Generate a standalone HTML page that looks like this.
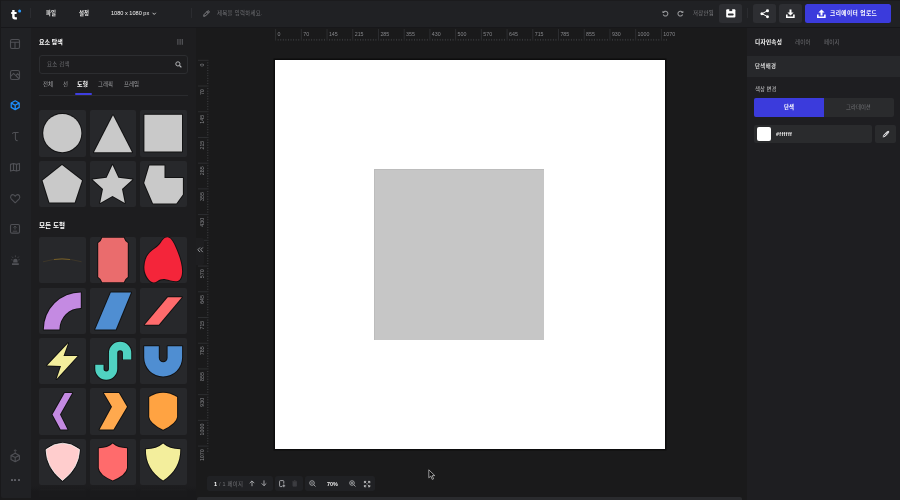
<!DOCTYPE html>
<html lang="ko">
<head>
<meta charset="utf-8">
<title>디자인 에디터</title>
<style>
*{box-sizing:border-box;margin:0;padding:0}
html,body{width:900px;height:500px;overflow:hidden;background:#1a1a1b}
body{font-family:"Liberation Sans","Noto Sans CJK KR",sans-serif;color:#d8d8d8;font-size:5.4px;position:relative}
.a{position:absolute}
.t{position:absolute;will-change:transform;white-space:nowrap;line-height:8px;height:8px;font-size:5.4px}
.b{font-weight:700;color:#fff}
.g{color:#707175}
.tile{position:absolute;width:46.8px;height:46.4px;background:#27282b;border-radius:2px;overflow:hidden}
.tile svg{position:absolute;left:0;top:0;width:46.8px;height:46.4px;overflow:visible}
.btn{position:absolute;background:#2d2e32;border-radius:2.5px}
.ic{position:absolute;overflow:visible}
.rl{position:absolute;will-change:transform;font-size:5.1px;line-height:6px;height:6px;color:#85868a;white-space:nowrap}
.mt{position:absolute;background:#313235}
</style>
</head>
<body>
<div class="a" style="left:0;top:0;width:900px;height:26.7px;background:#202124"></div>
<div class="a" style="left:0;top:0;width:900px;height:1px;background:#1b1b1d"></div>
<div class="a" style="left:1px;top:26.7px;width:30px;height:471px;background:#202124;border-radius:0 0 0 2px"></div>
<div class="a" style="left:31px;top:26.7px;width:165.3px;height:470px;background:#1d1d1f"></div>
<div class="a" style="left:747.2px;top:26.7px;width:152.8px;height:473.3px;background:#1e1e21"></div>
<div class="a" style="left:747.2px;top:55.6px;width:152.8px;height:21.4px;background:#27282b"></div>
<div class="a" style="left:0;top:26.6px;width:900px;height:1px;background:#17171a"></div>
<div class="a" style="left:0;top:0;width:1px;height:500px;background:#19191b"></div>
<div class="a" style="left:197px;top:496.6px;width:545px;height:4px;background:#2a2b2e;border-radius:2px 2px 0 0"></div>
<div class="a" style="left:275px;top:60px;width:389.6px;height:389.2px;background:#fff;box-shadow:0 0 0 1.5px #0c0c0d"></div>
<div class="a" style="left:373.7px;top:169.4px;width:170.2px;height:170.3px;background:#c6c6c6;box-shadow:inset 1px 1px 0 #bcbcbc"></div>
<svg class="ic" style="left:10.1px;top:8.8px" width="12" height="11" viewBox="0 0 12 11"><path d="M1.2 2.9 H2.2 V0.9 H4.6 V2.9 H6.6 V4.9 H4.6 V7.3 Q4.6 8.3 5.6 8.3 H6.9 V10.4 H4.9 Q2.2 10.4 2.2 7.7 V4.9 H1.2 Z" fill="#fff"/><circle cx="9.6" cy="2.05" r="1.5" fill="#2a9bff"/></svg>
<div class="a" style="left:30.3px;top:8.3px;width:0.8px;height:10px;background:#2b2c30"></div>
<div class="t" style="left:46.3px;top:9.3px;color:#e8e8e8;font-weight:700">파일</div>
<div class="t" style="left:79px;top:9.3px;color:#e8e8e8;font-weight:700">설정</div>
<div class="t" style="left:111.2px;top:9.3px;color:#f2f2f2;font-weight:500;font-size:5.6px">1080 x 1080 px</div>
<svg class="ic" style="left:151.8px;top:11.8px" width="4.4" height="3.4" viewBox="0 0 4.4 3.4"><path d="M0.6 0.8 L2.2 2.5 L3.8 0.8" fill="none" stroke="#d0d0d0" stroke-width="0.9"/></svg>
<div class="a" style="left:191px;top:8.3px;width:0.8px;height:10px;background:#2b2c30"></div>
<svg class="ic" style="left:202.6px;top:10.2px" width="7" height="7" viewBox="0 0 7 7"><path d="M0.7 6.3 L1.1 4.5 L4.6 1 Q5.2 0.4 5.9 1.1 Q6.6 1.8 6 2.4 L2.5 5.9 Z M4 1.7 L5.3 3" fill="none" stroke="#9a9b9e" stroke-width="0.8" stroke-linejoin="round"/></svg>
<div class="t g" style="letter-spacing:0.32px;left:216.8px;top:9.3px">제목을 입력하세요.</div>
<svg class="ic" style="left:661.5px;top:9.6px" width="6.8" height="6.8" viewBox="0 0 7 7"><path d="M1.3 2.6 A2.5 2.5 0 1 1 1.2 4.6" fill="none" stroke="#9a9b9e" stroke-width="1.05"/><path d="M0.5 0.7 V3.2 H3 Z" fill="#9a9b9e"/></svg>
<svg class="ic" style="left:676.7px;top:9.6px" width="6.8" height="6.8" viewBox="0 0 7 7"><path d="M5.7 2.6 A2.5 2.5 0 1 0 5.8 4.6" fill="none" stroke="#9a9b9e" stroke-width="1.05"/><path d="M6.5 0.7 V3.2 H4 Z" fill="#9a9b9e"/></svg>
<div class="t" style="color:#7c7d81;letter-spacing:0.3px;left:693.3px;top:9.3px">저장안됨</div>
<div class="btn" style="left:719.2px;top:4.4px;width:22.8px;height:18.3px"></div>
<svg class="ic" style="left:725.7px;top:9.1px" width="9.6" height="8.8" viewBox="0 0 9.6 8.8"><path d="M1.2 0.2 H8.4 Q9.4 0.2 9.4 1.2 V7.6 Q9.4 8.6 8.4 8.6 H1.2 Q0.2 8.6 0.2 7.6 V1.2 Q0.2 0.2 1.2 0.2 Z" fill="#fff"/><rect x="3.3" y="0" width="2.9" height="2.1" fill="#2d2e32"/><rect x="1.9" y="4.4" width="5.8" height="2.1" rx="0.9" fill="#2d2e32"/></svg>
<div class="a" style="left:746.8px;top:8px;width:0.8px;height:10.4px;background:#2b2c30"></div>
<div class="btn" style="left:752.8px;top:4.4px;width:22.8px;height:18.3px"></div>
<svg class="ic" style="left:760px;top:8.7px" width="9.4" height="9.4" viewBox="0 0 9.4 9.4"><path d="M7.4 1.8 L2 4.7 L7.4 7.6" fill="none" stroke="#fff" stroke-width="1"/><circle cx="7.5" cy="1.7" r="1.5" fill="#fff"/><circle cx="1.9" cy="4.7" r="1.5" fill="#fff"/><circle cx="7.5" cy="7.7" r="1.5" fill="#fff"/></svg>
<div class="btn" style="left:779px;top:4.4px;width:22.6px;height:18.3px"></div>
<svg class="ic" style="left:785.8px;top:8.8px" width="9" height="9.4" viewBox="0 0 9 9.4"><path d="M3.5 0.4 H5.5 V3.4 H7.6 L4.5 6.6 L1.4 3.4 H3.5 Z" fill="#fff"/><path d="M0.8 5.6 V8.3 H7.9 V5.6" fill="none" stroke="#fff" stroke-width="1.6"/></svg>
<div class="btn" style="left:805px;top:4.4px;width:86.4px;height:18.3px;background:#3b3bdc"></div>
<svg class="ic" style="left:817.2px;top:8.8px" width="9" height="9.4" viewBox="0 0 9 9.4"><path d="M3.5 6.6 H5.5 V3.6 H7.6 L4.5 0.4 L1.4 3.6 H3.5 Z" fill="#fff"/><path d="M0.8 5.6 V8.3 H7.9 V5.6" fill="none" stroke="#fff" stroke-width="1.6"/></svg>
<div class="t b" style="letter-spacing:0.42px;left:829.6px;top:9.3px;font-size:5.7px">크리에이터 업로드</div>
<svg class="ic" style="left:10.2px;top:39px" width="10" height="10" viewBox="0 0 10 10"><rect x="0.5" y="0.5" width="9" height="9" rx="1.4" fill="none" stroke="#4f5055" stroke-width="1.1"/><path d="M0.5 3.2 H9.5 M5 3.2 V9.5" stroke="#4f5055" stroke-width="1.1" fill="none"/></svg>
<svg class="ic" style="left:10.2px;top:69.8px" width="10" height="10" viewBox="0 0 10 10"><rect x="0.5" y="0.5" width="9" height="9" rx="1.8" fill="none" stroke="#4f5055" stroke-width="1.1"/><path d="M0.6 6.4 L3.6 3.4 L9.3 9 M6.2 5.2 L7.6 3.8 L9.4 5.6" stroke="#4f5055" stroke-width="1.1" fill="none"/></svg>
<svg class="ic" style="left:10.2px;top:100.2px" width="10.4" height="10.4" viewBox="0 0 10.4 10.4"><path d="M5.2 0.8 L9.2 3 V7.4 L5.2 9.6 L1.2 7.4 V3 Z M1.4 3.1 L5.2 5.3 L9 3.1 M5.2 5.3 V9.4" fill="none" stroke="#1e90ff" stroke-width="1.25" stroke-linejoin="round"/></svg>
<svg class="ic" style="left:11.8px;top:131.8px" width="7" height="9.4" viewBox="0 0 7 9.4"><path d="M0.4 1.9 Q0.8 0.6 2 0.6 H6.6 M3.4 0.6 V6.6 Q3.4 8.8 5.6 8.6" fill="none" stroke="#4f5055" stroke-width="1.05"/></svg>
<svg class="ic" style="left:10.4px;top:163px" width="10" height="8.6" viewBox="0 0 10 8.6"><path d="M0.5 1.4 L3.5 0.5 L6.5 1.4 L9.5 0.5 V7.2 L6.5 8.1 L3.5 7.2 L0.5 8.1 Z M3.5 0.5 V7.2 M6.5 1.4 V8.1" fill="none" stroke="#4f5055" stroke-width="1.1" stroke-linejoin="round"/></svg>
<svg class="ic" style="left:10.2px;top:193.6px" width="10.4" height="9.4" viewBox="0 0 10.4 9.4"><path d="M5.2 8.8 L1.2 4.8 Q0 3.2 1 1.7 Q2.2 0.2 3.9 0.9 Q4.8 1.3 5.2 2.2 Q5.6 1.3 6.5 0.9 Q8.2 0.2 9.4 1.7 Q10.4 3.2 9.2 4.8 Z" fill="none" stroke="#4f5055" stroke-width="1.1" stroke-linejoin="round"/></svg>
<svg class="ic" style="left:10.2px;top:223.8px" width="10" height="9.6" viewBox="0 0 10 9.6"><rect x="0.5" y="0.5" width="9" height="8.6" rx="1.4" fill="none" stroke="#4f5055" stroke-width="1.1"/><path d="M5 5.6 V2.2 M3.5 3.6 L5 2.1 L6.5 3.6 M2.8 7.2 H7.2" fill="none" stroke="#4f5055" stroke-width="0.9"/></svg>
<svg class="ic" style="left:11.2px;top:254.8px" width="8.8" height="10.4" viewBox="0 0 8.8 10.4"><path d="M2.2 7.6 V6 Q2.2 3.8 4.4 3.8 Q6.6 3.8 6.6 6 V7.6 Z M1 8.2 H7.8 V9.9 H1 Z" fill="#4f5055"/><path d="M4.4 0.4 V2.2 M1 1.6 L2.1 2.9 M7.8 1.6 L6.7 2.9 M0.2 4.6 L1.5 5 M8.6 4.6 L7.3 5" stroke="#4f5055" stroke-width="0.7" fill="none"/></svg>
<svg class="ic" style="left:10.2px;top:449px" width="10.4" height="13.4" viewBox="0 0 10.4 13.4"><path d="M5.2 4.2 L9.4 6.4 V10.6 L5.2 12.8 L1 10.6 V6.4 Z M1.2 6.5 L5.2 8.6 L9.2 6.5 M5.2 8.6 V12.6" fill="none" stroke="#4f5055" stroke-width="1.1" stroke-linejoin="round"/><path d="M5.2 4 V0.8 M3.9 2 L5.2 0.7 L6.5 2" fill="none" stroke="#4f5055" stroke-width="0.9"/></svg>
<div class="a" style="left:10.8px;top:478.7px;width:2.1px;height:2.1px;background:#63646a;border-radius:0.4px"></div>
<div class="a" style="left:14.4px;top:478.7px;width:2.1px;height:2.1px;background:#63646a;border-radius:0.4px"></div>
<div class="a" style="left:18.0px;top:478.7px;width:2.1px;height:2.1px;background:#63646a;border-radius:0.4px"></div>
<div class="t b" style="left:39px;top:37.6px;font-size:6px">요소 탐색</div>
<svg class="ic" style="left:177.2px;top:39.3px" width="6.2" height="5.8" viewBox="0 0 6.2 5.8"><path d="M0.9 0 V5.8 M3.1 0 V5.8 M5.3 0 V5.8" stroke="#707175" stroke-width="0.8"/></svg>
<div class="a" style="left:39.1px;top:55px;width:148.6px;height:18.7px;border:0.8px solid #2c2d30;border-radius:3px;background:#1d1d1f"></div>
<div class="t g" style="letter-spacing:0.25px;left:47.2px;top:60.2px">요소 검색</div>
<svg class="ic" style="left:175.4px;top:60.8px" width="7" height="7" viewBox="0 0 7 7"><circle cx="2.9" cy="2.9" r="2.1" fill="none" stroke="#b4b5b8" stroke-width="1"/><path d="M4.5 4.5 L6.4 6.4" stroke="#b4b5b8" stroke-width="1.2"/></svg>
<div class="t" style="left:43px;top:80px;color:#a4a5a8">전체</div>
<div class="t" style="left:62.7px;top:80px;color:#a4a5a8">선</div>
<div class="t b" style="left:77.4px;top:80px;font-size:6px">도형</div>
<div class="t" style="left:98.2px;top:80px;color:#a4a5a8">그래픽</div>
<div class="t" style="left:124.1px;top:80px;color:#a4a5a8">프레임</div>
<div class="a" style="left:39.1px;top:95px;width:148.6px;height:0.7px;background:#2a2b2e"></div>
<div class="a" style="left:74.8px;top:93.2px;width:17.5px;height:2px;background:#3e3ee0;border-radius:1px"></div>
<div class="t b" style="left:39px;top:222.2px;font-size:6.6px">모든 도형</div>
<div class="tile" style="left:39.1px;top:110.3px"><svg viewBox="0 0 46.8 46.4"><circle cx="23.3" cy="23.1" r="19.1" fill="#c9c9c9" stroke="#121213" stroke-width="2" stroke-linejoin="round" paint-order="stroke"/></svg></div>
<div class="tile" style="left:89.6px;top:110.3px"><svg viewBox="0 0 46.8 46.4"><path d="M23 5.3 L42 42.2 H4 Z" fill="#c9c9c9" stroke="#121213" stroke-width="2" stroke-linejoin="round" paint-order="stroke"/></svg></div>
<div class="tile" style="left:139.9px;top:110.3px"><svg viewBox="0 0 46.8 46.4"><rect x="4.4" y="4.8" width="37.6" height="36.7" fill="#c9c9c9" stroke="#121213" stroke-width="2" stroke-linejoin="round" paint-order="stroke"/></svg></div>
<div class="tile" style="left:39.1px;top:160.9px"><svg viewBox="0 0 46.8 46.4"><path d="M23 4.1 L43 19.6 L35.7 41.4 H10.4 L3.5 19.6 Z" fill="#c9c9c9" stroke="#121213" stroke-width="2" stroke-linejoin="round" paint-order="stroke"/></svg></div>
<div class="tile" style="left:89.6px;top:160.9px"><svg viewBox="0 0 46.8 46.4"><polygon points="22.5,3.9 28.4,16.8 42.5,18.4 32.0,28.0 34.8,41.9 22.5,34.9 10.2,41.9 13.0,28.0 2.5,18.4 16.6,16.8" fill="#c9c9c9" stroke="#121213" stroke-width="2" stroke-linejoin="round" paint-order="stroke"/></svg></div>
<div class="tile" style="left:139.9px;top:160.9px"><svg viewBox="0 0 46.8 46.4"><path d="M9.4 4.4 H24.5 V16.9 H42.9 V33.5 L36.4 42.4 H13 L4.2 22.1 Z" fill="#c9c9c9" stroke="#121213" stroke-width="2" stroke-linejoin="round" paint-order="stroke"/></svg></div>
<div class="tile" style="left:39.1px;top:237.1px"><svg viewBox="0 0 46.8 46.4"><path d="M4 24.8 Q23 19.2 42.6 24.8" fill="none" stroke="#5a4a24" stroke-width="0.55" opacity="0.75"/><path d="M15 22.5 Q23 21.3 31 22.5" fill="none" stroke="#a07a26" stroke-width="0.6"/></svg></div>
<div class="tile" style="left:89.6px;top:237.1px"><svg viewBox="0 0 46.8 46.4"><path d="M12.2 0.7 H33.8 Q34.8 4.4 37.8 6.1 V39.9 Q34.8 41.6 33.8 45.3 H12.2 Q11.2 41.6 8.2 39.9 V6.1 Q11.2 4.4 12.2 0.7 Z" fill="#ea6c6d" stroke="#121213" stroke-width="2" stroke-linejoin="round" paint-order="stroke"/></svg></div>
<div class="tile" style="left:139.9px;top:237.1px"><svg viewBox="0 0 46.8 46.4"><path d="M27.6 0.3 C31.6 0.6 34.6 7.5 37 13.5 C39.8 20.5 42.4 28.5 42.1 35 C41.8 40.6 40 44 36.4 44.2 C32.4 44.4 29 42.6 25.6 42.2 C21.6 41.8 19.6 42.6 17.2 44.2 C14.6 45.9 12.2 45.8 10.2 44 C6.6 40.8 4 35 4.4 29.4 C4.8 23.4 6.4 19 9.8 15.6 C13.6 11.8 17.6 10.4 20.6 6 C22.6 3 24.4 0.1 27.6 0.3 Z" fill="#f4253a" stroke="#121213" stroke-width="2" stroke-linejoin="round" paint-order="stroke"/></svg></div>
<div class="tile" style="left:39.1px;top:287.6px"><svg viewBox="0 0 46.8 46.4"><path d="M4.8 41.4 A37 37 0 0 1 41.8 4.4 V20 A21.4 21.4 0 0 0 20.4 41.4 Z" fill="#c48ae2" stroke="#121213" stroke-width="2" stroke-linejoin="round" paint-order="stroke"/></svg></div>
<div class="tile" style="left:89.6px;top:287.6px"><svg viewBox="0 0 46.8 46.4"><path d="M20.8 4.6 H41 L25.8 41.6 H5.2 Z" fill="#4f8ed2" stroke="#121213" stroke-width="2" stroke-linejoin="round" paint-order="stroke"/></svg></div>
<div class="tile" style="left:139.9px;top:287.6px"><svg viewBox="0 0 46.8 46.4"><path d="M27.8 9.2 H41.9 L18.8 36.8 H4.7 Z" fill="#ff6b6c" stroke="#121213" stroke-width="2" stroke-linejoin="round" paint-order="stroke"/></svg></div>
<div class="tile" style="left:39.1px;top:338px"><svg viewBox="0 0 46.8 46.4"><path d="M29.1 5.2 L24.5 17.9 H38.6 L17.6 41 L22 28.1 L8.1 27.4 Z" fill="#f3ee9c" stroke="#121213" stroke-width="2" stroke-linejoin="round" paint-order="stroke"/></svg></div>
<div class="tile" style="left:89.6px;top:338px"><svg viewBox="0 0 46.8 46.4"><path d="M9.4 26.2 V30.8 A6.85 6.85 0 0 0 23.1 30.8 V15 A7 7 0 0 1 37.1 15 V22" fill="none" stroke="#141415" stroke-width="10.4"/><path d="M9.4 26.7 V30.8 A6.85 6.85 0 0 0 23.1 30.8 V15 A7 7 0 0 1 37.1 15 V21.5" fill="none" stroke="#50d2c2" stroke-width="8.3"/></svg></div>
<div class="tile" style="left:139.9px;top:338px"><svg viewBox="0 0 46.8 46.4"><path d="M4.2 8.2 H18.8 V19.8 A4.4 4.4 0 0 0 27.6 19.8 V8.2 H42.1 V19.5 A18.95 18.95 0 0 1 4.2 19.5 Z" fill="#4f8ed2" stroke="#121213" stroke-width="2" stroke-linejoin="round" paint-order="stroke"/></svg></div>
<div class="tile" style="left:39.1px;top:388.4px"><svg viewBox="0 0 46.8 46.4"><path d="M25.7 4.9 H33.2 L21 26.6 L28.5 41.6 H21.6 L13.5 26.6 Z" fill="#c48ae2" stroke="#121213" stroke-width="2" stroke-linejoin="round" paint-order="stroke"/></svg></div>
<div class="tile" style="left:89.6px;top:388.4px"><svg viewBox="0 0 46.8 46.4"><path d="M13.9 4.9 H28.9 L37 18.7 L23.5 41.6 H9.6 L22 18.7 Z" fill="#ffa94e" stroke="#121213" stroke-width="2" stroke-linejoin="round" paint-order="stroke"/></svg></div>
<div class="tile" style="left:139.9px;top:388.4px"><svg viewBox="0 0 46.8 46.4"><path d="M9.2 9 Q23.1 0.4 37.1 9 V29 Q36.4 35.4 23.1 41.8 Q9.9 35.4 9.2 29 Z" fill="#ffa342" stroke="#121213" stroke-width="2" stroke-linejoin="round" paint-order="stroke"/></svg></div>
<div class="tile" style="left:39.1px;top:438.9px"><svg viewBox="0 0 46.8 46.4"><path d="M7 10.6 Q23.5 -2.2 40.6 10.6 Q40 29 23.5 41.5 Q7.5 29 7 10.6 Z" fill="none" stroke="#141415" stroke-width="2.4"/><path d="M7 10.6 Q23.5 -2.2 40.6 10.6 Q40 29 23.5 41.5 Q7.5 29 7 10.6 Z" fill="#ffcdcd" stroke="#fff" stroke-width="0.7"/></svg></div>
<div class="tile" style="left:89.6px;top:438.9px"><svg viewBox="0 0 46.8 46.4"><path d="M8.8 9.2 Q18 9 22.7 4.5 Q27.5 9 37 9.2 V29 Q36 36 22.7 41.4 Q9.5 36 8.8 29 Z" fill="#ff6b6c" stroke="#121213" stroke-width="2" stroke-linejoin="round" paint-order="stroke"/></svg></div>
<div class="tile" style="left:139.9px;top:438.9px"><svg viewBox="0 0 46.8 46.4"><path d="M5.9 10.2 Q17 10 23.1 4.5 Q29 10 40.3 10.2 Q40.5 30 23.1 41.5 Q5.5 30 5.9 10.2 Z" fill="#f3ee9c" stroke="#121213" stroke-width="2" stroke-linejoin="round" paint-order="stroke"/></svg></div>
<div class="a" style="left:39.1px;top:489.3px;width:46.8px;height:7.3px;background:#232426;border-radius:2px 2px 0 0"></div>
<div class="a" style="left:89.6px;top:489.3px;width:46.8px;height:7.3px;background:#232426;border-radius:2px 2px 0 0"></div>
<div class="a" style="left:139.9px;top:489.3px;width:46.8px;height:7.3px;background:#232426;border-radius:2px 2px 0 0"></div>
<div class="a" style="left:31px;top:485.5px;width:165.3px;height:5.5px;background:linear-gradient(rgba(25,25,27,0),rgba(25,25,27,0.88))"></div>
<div class="a" style="left:31px;top:491px;width:165.3px;height:9px;background:rgba(25,25,27,0.88)"></div>
<div class="a" style="left:31px;top:496.7px;width:165.6px;height:3.3px;background:#19191b"></div>
<svg class="ic" style="left:0;top:0" width="900" height="500" viewBox="0 0 900 500" font-family='"Liberation Sans",sans-serif' font-size="5.3" fill="#85868a"><path d="M278.17 38.9V40.7M280.74 38.9V40.7M283.32 38.9V40.7M285.89 38.9V40.7M288.46 38.9V40.7M291.03 38.9V40.7M293.60 38.9V40.7M296.18 38.9V40.7M298.75 38.9V40.7M303.89 38.9V40.7M306.46 38.9V40.7M309.04 38.9V40.7M311.61 38.9V40.7M314.18 38.9V40.7M316.75 38.9V40.7M319.32 38.9V40.7M321.90 38.9V40.7M324.47 38.9V40.7M329.61 38.9V40.7M332.18 38.9V40.7M334.76 38.9V40.7M337.33 38.9V40.7M339.90 38.9V40.7M342.47 38.9V40.7M345.04 38.9V40.7M347.62 38.9V40.7M350.19 38.9V40.7M355.33 38.9V40.7M357.90 38.9V40.7M360.48 38.9V40.7M363.05 38.9V40.7M365.62 38.9V40.7M368.19 38.9V40.7M370.76 38.9V40.7M373.34 38.9V40.7M375.91 38.9V40.7M381.05 38.9V40.7M383.62 38.9V40.7M386.20 38.9V40.7M388.77 38.9V40.7M391.34 38.9V40.7M393.91 38.9V40.7M396.48 38.9V40.7M399.06 38.9V40.7M401.63 38.9V40.7M406.77 38.9V40.7M409.34 38.9V40.7M411.92 38.9V40.7M414.49 38.9V40.7M417.06 38.9V40.7M419.63 38.9V40.7M422.20 38.9V40.7M424.78 38.9V40.7M427.35 38.9V40.7M432.49 38.9V40.7M435.06 38.9V40.7M437.64 38.9V40.7M440.21 38.9V40.7M442.78 38.9V40.7M445.35 38.9V40.7M447.92 38.9V40.7M450.50 38.9V40.7M453.07 38.9V40.7M458.21 38.9V40.7M460.78 38.9V40.7M463.36 38.9V40.7M465.93 38.9V40.7M468.50 38.9V40.7M471.07 38.9V40.7M473.64 38.9V40.7M476.22 38.9V40.7M478.79 38.9V40.7M483.93 38.9V40.7M486.50 38.9V40.7M489.08 38.9V40.7M491.65 38.9V40.7M494.22 38.9V40.7M496.79 38.9V40.7M499.36 38.9V40.7M501.94 38.9V40.7M504.51 38.9V40.7M509.65 38.9V40.7M512.22 38.9V40.7M514.80 38.9V40.7M517.37 38.9V40.7M519.94 38.9V40.7M522.51 38.9V40.7M525.08 38.9V40.7M527.66 38.9V40.7M530.23 38.9V40.7M535.37 38.9V40.7M537.94 38.9V40.7M540.52 38.9V40.7M543.09 38.9V40.7M545.66 38.9V40.7M548.23 38.9V40.7M550.80 38.9V40.7M553.38 38.9V40.7M555.95 38.9V40.7M561.09 38.9V40.7M563.66 38.9V40.7M566.24 38.9V40.7M568.81 38.9V40.7M571.38 38.9V40.7M573.95 38.9V40.7M576.52 38.9V40.7M579.10 38.9V40.7M581.67 38.9V40.7M586.81 38.9V40.7M589.38 38.9V40.7M591.96 38.9V40.7M594.53 38.9V40.7M597.10 38.9V40.7M599.67 38.9V40.7M602.24 38.9V40.7M604.82 38.9V40.7M607.39 38.9V40.7M612.53 38.9V40.7M615.10 38.9V40.7M617.68 38.9V40.7M620.25 38.9V40.7M622.82 38.9V40.7M625.39 38.9V40.7M627.96 38.9V40.7M630.54 38.9V40.7M633.11 38.9V40.7M638.25 38.9V40.7M640.82 38.9V40.7M643.40 38.9V40.7M645.97 38.9V40.7M648.54 38.9V40.7M651.11 38.9V40.7M653.68 38.9V40.7M656.26 38.9V40.7M658.83 38.9V40.7M663.97 38.9V40.7M666.54 38.9V40.7M207 62.87H208.4M207 65.44H208.4M207 68.02H208.4M207 70.59H208.4M207 73.16H208.4M207 75.73H208.4M207 78.30H208.4M207 80.88H208.4M207 83.45H208.4M207 88.59H208.4M207 91.16H208.4M207 93.74H208.4M207 96.31H208.4M207 98.88H208.4M207 101.45H208.4M207 104.02H208.4M207 106.60H208.4M207 109.17H208.4M207 114.31H208.4M207 116.88H208.4M207 119.46H208.4M207 122.03H208.4M207 124.60H208.4M207 127.17H208.4M207 129.74H208.4M207 132.32H208.4M207 134.89H208.4M207 140.03H208.4M207 142.60H208.4M207 145.18H208.4M207 147.75H208.4M207 150.32H208.4M207 152.89H208.4M207 155.46H208.4M207 158.04H208.4M207 160.61H208.4M207 165.75H208.4M207 168.32H208.4M207 170.90H208.4M207 173.47H208.4M207 176.04H208.4M207 178.61H208.4M207 181.18H208.4M207 183.76H208.4M207 186.33H208.4M207 191.47H208.4M207 194.04H208.4M207 196.62H208.4M207 199.19H208.4M207 201.76H208.4M207 204.33H208.4M207 206.90H208.4M207 209.48H208.4M207 212.05H208.4M207 217.19H208.4M207 219.76H208.4M207 222.34H208.4M207 224.91H208.4M207 227.48H208.4M207 230.05H208.4M207 232.62H208.4M207 235.20H208.4M207 237.77H208.4M207 242.91H208.4M207 245.48H208.4M207 248.06H208.4M207 250.63H208.4M207 253.20H208.4M207 255.77H208.4M207 258.34H208.4M207 260.92H208.4M207 263.49H208.4M207 268.63H208.4M207 271.20H208.4M207 273.78H208.4M207 276.35H208.4M207 278.92H208.4M207 281.49H208.4M207 284.06H208.4M207 286.64H208.4M207 289.21H208.4M207 294.35H208.4M207 296.92H208.4M207 299.50H208.4M207 302.07H208.4M207 304.64H208.4M207 307.21H208.4M207 309.78H208.4M207 312.36H208.4M207 314.93H208.4M207 320.07H208.4M207 322.64H208.4M207 325.22H208.4M207 327.79H208.4M207 330.36H208.4M207 332.93H208.4M207 335.50H208.4M207 338.08H208.4M207 340.65H208.4M207 345.79H208.4M207 348.36H208.4M207 350.94H208.4M207 353.51H208.4M207 356.08H208.4M207 358.65H208.4M207 361.22H208.4M207 363.80H208.4M207 366.37H208.4M207 371.51H208.4M207 374.08H208.4M207 376.66H208.4M207 379.23H208.4M207 381.80H208.4M207 384.37H208.4M207 386.94H208.4M207 389.52H208.4M207 392.09H208.4M207 397.23H208.4M207 399.80H208.4M207 402.38H208.4M207 404.95H208.4M207 407.52H208.4M207 410.09H208.4M207 412.66H208.4M207 415.24H208.4M207 417.81H208.4M207 422.95H208.4M207 425.52H208.4M207 428.10H208.4M207 430.67H208.4M207 433.24H208.4M207 435.81H208.4M207 438.38H208.4M207 440.96H208.4M207 443.53H208.4M207 448.67H208.4M207 451.24H208.4" stroke="#4c4d50" stroke-width="0.6" fill="none"/><path d="M275.60 29.1V40.7M198 60.30H208.6M301.32 29.1V40.7M198 86.02H208.6M327.04 29.1V40.7M198 111.74H208.6M352.76 29.1V40.7M198 137.46H208.6M378.48 29.1V40.7M198 163.18H208.6M404.20 29.1V40.7M198 188.90H208.6M429.92 29.1V40.7M198 214.62H208.6M455.64 29.1V40.7M198 240.34H208.6M481.36 29.1V40.7M198 266.06H208.6M507.08 29.1V40.7M198 291.78H208.6M532.80 29.1V40.7M198 317.50H208.6M558.52 29.1V40.7M198 343.22H208.6M584.24 29.1V40.7M198 368.94H208.6M609.96 29.1V40.7M198 394.66H208.6M635.68 29.1V40.7M198 420.38H208.6M661.40 29.1V40.7M198 446.10H208.6" stroke="#323336" stroke-width="0.8" fill="none"/><text x="277.5" y="36.1">0</text><text x="303.2" y="36.1">70</text><text x="328.9" y="36.1">145</text><text x="354.7" y="36.1">215</text><text x="380.4" y="36.1">285</text><text x="406.1" y="36.1">355</text><text x="431.8" y="36.1">430</text><text x="457.5" y="36.1">500</text><text x="483.3" y="36.1">570</text><text x="509.0" y="36.1">645</text><text x="534.7" y="36.1">715</text><text x="560.4" y="36.1">785</text><text x="586.1" y="36.1">855</text><text x="611.9" y="36.1">930</text><text x="637.6" y="36.1">1000</text><text x="663.3" y="36.1">1070</text><text transform="translate(203.5 63.5) rotate(-90)" text-anchor="end">0</text><text transform="translate(203.5 89.2) rotate(-90)" text-anchor="end">70</text><text transform="translate(203.5 114.9) rotate(-90)" text-anchor="end">145</text><text transform="translate(203.5 140.7) rotate(-90)" text-anchor="end">215</text><text transform="translate(203.5 166.4) rotate(-90)" text-anchor="end">285</text><text transform="translate(203.5 192.1) rotate(-90)" text-anchor="end">355</text><text transform="translate(203.5 217.8) rotate(-90)" text-anchor="end">430</text><text transform="translate(203.5 243.5) rotate(-90)" text-anchor="end">500</text><text transform="translate(203.5 269.3) rotate(-90)" text-anchor="end">570</text><text transform="translate(203.5 295.0) rotate(-90)" text-anchor="end">645</text><text transform="translate(203.5 320.7) rotate(-90)" text-anchor="end">715</text><text transform="translate(203.5 346.4) rotate(-90)" text-anchor="end">785</text><text transform="translate(203.5 372.1) rotate(-90)" text-anchor="end">855</text><text transform="translate(203.5 397.9) rotate(-90)" text-anchor="end">930</text><text transform="translate(203.5 423.6) rotate(-90)" text-anchor="end">1000</text><text transform="translate(203.5 449.3) rotate(-90)" text-anchor="end">1070</text></svg>
<div class="a" style="left:196.3px;top:238.2px;width:7.9px;height:27.2px;background:#1e1e20;border-radius:0 2px 2px 0"></div>
<svg class="ic" style="left:196.6px;top:247.4px" width="6.6" height="5.6" viewBox="0 0 6.6 5.6"><path d="M3 0.5 L0.8 2.8 L3 5.1 M5.8 0.5 L3.6 2.8 L5.8 5.1" fill="none" stroke="#9a9b9e" stroke-width="0.9"/></svg>
<div class="btn" style="left:206.7px;top:475.8px;width:66.2px;height:15.6px;background:#202124"></div>
<div class="btn" style="left:274.7px;top:475.8px;width:28.2px;height:15.6px;background:#202124"></div>
<div class="btn" style="left:305px;top:475.8px;width:70px;height:15.6px;background:#202124"></div>
<div class="t b" style="left:213.6px;top:479.6px;font-size:5.6px">1</div>
<div class="t g" style="letter-spacing:0.25px;left:218.6px;top:479.6px">/ 1 페이지</div>
<svg class="ic" style="left:248.6px;top:480.4px" width="6" height="6.6" viewBox="0 0 6 6.6"><path d="M3 6.2 V1 M0.7 3.2 L3 0.9 L5.3 3.2" fill="none" stroke="#b0b1b4" stroke-width="0.9"/></svg>
<svg class="ic" style="left:260.9px;top:480.4px" width="6" height="6.6" viewBox="0 0 6 6.6"><path d="M3 0.4 V5.6 M0.7 3.4 L3 5.7 L5.3 3.4" fill="none" stroke="#b0b1b4" stroke-width="0.9"/></svg>
<svg class="ic" style="left:278.6px;top:480px" width="6.4" height="7.4" viewBox="0 0 6.4 7.4"><path d="M3.2 6.6 H1.4 Q0.6 6.6 0.6 5.8 V1.4 Q0.6 0.6 1.4 0.6 H4 Q4.8 0.6 4.8 1.4 V3.6" fill="none" stroke="#b0b1b4" stroke-width="0.9"/><path d="M4.8 4.4 V7.2 M3.4 5.8 H6.2" stroke="#b0b1b4" stroke-width="0.9"/></svg>
<svg class="ic" style="left:291.8px;top:480.2px" width="5.4" height="6.8" viewBox="0 0 5.4 6.8"><path d="M0.3 1.4 H5.1 M1.9 0.5 H3.5 M0.9 2 V6.2 H4.5 V2 Z" fill="#3c3d41" stroke="#3c3d41" stroke-width="0.7"/></svg>
<svg class="ic" style="left:309px;top:480.2px" width="7" height="7" viewBox="0 0 7 7"><circle cx="3" cy="3" r="2.3" fill="none" stroke="#b0b1b4" stroke-width="0.85"/><path d="M4.7 4.7 L6.5 6.5 M1.9 3 H4.1" stroke="#b0b1b4" stroke-width="0.85"/></svg>
<div class="t" style="left:327px;top:479.6px;color:#ececec;font-weight:700;font-size:5.4px">70%</div>
<svg class="ic" style="left:348.8px;top:480.2px" width="7" height="7" viewBox="0 0 7 7"><circle cx="3" cy="3" r="2.3" fill="none" stroke="#b0b1b4" stroke-width="0.85"/><path d="M4.7 4.7 L6.5 6.5 M1.9 3 H4.1 M3 1.9 V4.1" stroke="#b0b1b4" stroke-width="0.85"/></svg>
<svg class="ic" style="left:364.2px;top:480.6px" width="6.2" height="6.2" viewBox="0 0 6.2 6.2"><path d="M0.4 2.2 V0.4 H2.2 M4 0.4 H5.8 V2.2 M5.8 4 V5.8 H4 M2.2 5.8 H0.4 V4 M0.6 0.6 L2.4 2.4 M5.6 0.6 L3.8 2.4 M5.6 5.6 L3.8 3.8 M0.6 5.6 L2.4 3.8" fill="none" stroke="#d4d4d6" stroke-width="0.8"/></svg>
<svg class="ic" style="left:428px;top:468.8px" width="8" height="12" viewBox="0 0 8 12"><path d="M0.8 0.8 V8.8 L2.8 7 L4.2 10.4 L5.6 9.8 L4.2 6.6 H6.8 Z" fill="#0e0e0f" stroke="#c4c4c4" stroke-width="0.75" stroke-linejoin="round"/></svg>
<div class="t b" style="letter-spacing:0.3px;left:755px;top:37.5px;font-size:5.6px">디자인속성</div>
<div class="t g" style="letter-spacing:0.3px;left:794.8px;top:37.5px">레이어</div>
<div class="t g" style="letter-spacing:0.3px;left:823.8px;top:37.5px">페이지</div>
<div class="t" style="letter-spacing:0.4px;left:755px;top:62.2px;color:#e8e8e8;font-weight:500">단색배경</div>
<div class="t" style="left:755px;top:84.6px;color:#c8c8ca">색상 변경</div>
<div class="a" style="left:754.3px;top:98px;width:139.7px;height:19px;background:#2a2b2d;border-radius:2px"></div>
<div class="a" style="left:754.3px;top:98px;width:70.2px;height:19px;background:#3b3bdc;border-radius:2px 0 0 2px"></div>
<div class="t b" style="left:784.4px;top:102.7px">단색</div>
<div class="t g" style="left:845.8px;top:102.7px">그라데이션</div>
<div class="a" style="left:754.3px;top:125px;width:117.4px;height:18.2px;background:#2a2b2d;border-radius:2px"></div>
<div class="a" style="left:756.8px;top:126.8px;width:14.4px;height:14.2px;background:#fff;border-radius:2px"></div>
<div class="t" style="letter-spacing:0.42px;left:775.8px;top:130.4px;color:#f0f0f0;font-weight:700;font-size:5.2px">#ffffff</div>
<div class="a" style="left:875.3px;top:124.9px;width:20.7px;height:18.2px;background:#2a2b2d;border-radius:2px"></div>
<svg class="ic" style="left:881.6px;top:130px" width="8" height="8" viewBox="0 0 8 8"><ellipse cx="4" cy="4.1" rx="4.7" ry="1.75" transform="rotate(-46 4 4.1)" fill="#d6d6d9" stroke="#141415" stroke-width="0.7"/><path d="M1.9 6.1 L3.9 4.1" stroke="#3a3b3e" stroke-width="0.75" stroke-linecap="round"/><path d="M4.3 2.6 L5.5 3.8" stroke="#8c8d90" stroke-width="0.5"/></svg>
</body>
</html>
